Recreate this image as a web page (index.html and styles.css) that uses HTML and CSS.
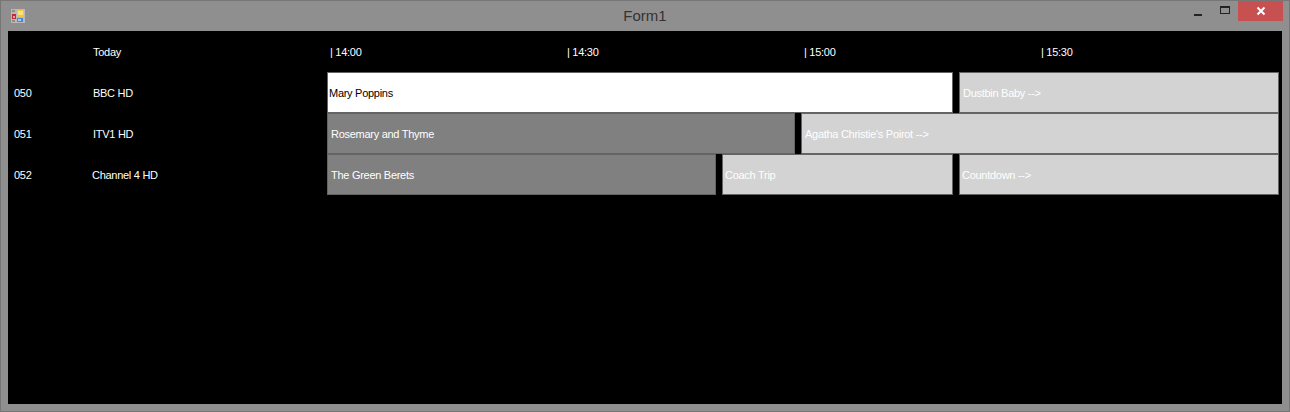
FILE: index.html
```html
<!DOCTYPE html>
<html>
   <head>
      <title>Form1</title>
      <link rel="stylesheet" href="styles.css">
   </head>
   <body>
      <div class="window">
         <div class="titlebar">
            <svg class="app-icon" width="14" height="14" viewBox="0 0 14 14">
               <rect x="0" y="0" width="14" height="14" fill="#b9b9b9"/>
               <rect x="1" y="1" width="3" height="2" fill="#8f8f8f"/>
               <rect x="1" y="5" width="4" height="5" fill="#c22c2c"/>
               <rect x="2" y="7" width="2" height="2" fill="#e8a0a0"/>
               <rect x="6" y="1" width="7" height="7" fill="#f3c53f"/>
               <rect x="7" y="2" width="5" height="4" fill="#fbe27e"/>
               <rect x="6" y="9" width="6" height="4" fill="#4c86d8"/>
               <rect x="7" y="10" width="3" height="2" fill="#a9c9f0"/>
               <rect x="1" y="11" width="3" height="2" fill="#8f8f8f"/>
            </svg>
            <span class="title">Form1</span>
            <div class="win-controls">
               <span class="win-btn"><span class="min-glyph"></span></span>
               <span class="win-btn"><span class="max-glyph"></span></span>
               <span class="win-btn close"><svg width="10" height="10" viewBox="0 0 10 10"><path d="M1.5 1.5 L8.5 8.5 M8.5 1.5 L1.5 8.5" stroke="#fff" stroke-width="2"/></svg></span>
            </div>
         </div>
         <div class="client">
            <div class="row header-row">
               <span class="channel-num"></span>
               <span class="channel-name">Today</span>
               <div class="times">
                  <span class="time">| 14:00</span>
                  <span class="time">| 14:30</span>
                  <span class="time">| 15:00</span>
                  <span class="time">| 15:30</span>
               </div>
            </div>
            <div class="row">
               <span class="channel-num">050</span>
               <span class="channel-name">BBC HD</span>
               <div class="programs">
                  <div class="prog now" style="width: 626px">Mary Poppins</div>
                  <div class="prog later" style="width: 320px">Dustbin Baby --&gt;</div>
               </div>
            </div>
            <div class="row">
               <span class="channel-num">051</span>
               <span class="channel-name">ITV1 HD</span>
               <div class="programs">
                  <div class="prog past" style="width: 468px">Rosemary and Thyme</div>
                  <div class="prog later" style="width: 478px">Agatha Christie's Poirot --&gt;</div>
               </div>
            </div>
            <div class="row">
               <span class="channel-num">052</span>
               <span class="channel-name wide">Channel 4 HD</span>
               <div class="programs">
                  <div class="prog past" style="width: 389px">The Green Berets</div>
                  <div class="prog later tight" style="width: 231px">Coach Trip</div>
                  <div class="prog later tight" style="width: 320px">Countdown --&gt;</div>
               </div>
            </div>
         </div>
      </div>
   </body>
</html>
```

FILE: styles.css
```css
* {
   margin: 0;
   padding: 0;
   box-sizing: border-box;
}
body {
   width: 1290px;
   height: 412px;
   overflow: hidden;
   font-family: 'Liberation Sans', Arial, sans-serif;
   font-size: 11px;
   letter-spacing: -0.28px;
   background: #8f8f8f;
}
.window {
   width: 1290px;
   height: 412px;
   display: flex;
   flex-direction: column;
   background: #8f8f8f;
   border: 1px solid #767676;
   padding: 0 7px 7px 7px;
}
.titlebar {
   height: 30px;
   display: flex;
   align-items: center;
   position: relative;
}
.app-icon {
   margin: 0 0 1px 3px;
}
.title {
   position: absolute;
   left: 0;
   right: 0;
   top: 6px;
   text-align: center;
   font-size: 15px;
   letter-spacing: 0;
   line-height: 18px;
   color: #333333;
}
.win-controls {
   position: absolute;
   top: 0;
   right: -1px;
   display: flex;
}
.win-btn {
   width: 26px;
   height: 20px;
   display: flex;
   align-items: center;
   justify-content: center;
}
.win-btn.close {
   width: 45px;
   background: #c75050;
}
.min-glyph {
   width: 8px;
   height: 2px;
   background: #222;
   margin: 7px 2px 0 0;
}
.max-glyph {
   width: 10px;
   height: 8px;
   border: 1px solid #222;
   border-top-width: 2px;
   margin-bottom: 2px;
}
.client {
   flex: 1;
   background: #000000;
   padding-top: 1px;
   color: #ffffff;
}
.row {
   display: flex;
   align-items: center;
   height: 41px;
}
.header-row {
   height: 40px;
}
.channel-num {
   width: 85px;
   padding-left: 6px;
}
.channel-name {
   width: 234px;
}
.channel-name.wide {
   margin-left: -1px;
   width: 235px;
}
.times {
   display: flex;
   padding-left: 3px;
}
.time {
   width: 237px;
}
.programs {
   display: flex;
   gap: 6px;
   height: 41px;
}
.prog {
   display: flex;
   align-items: center;
   padding: 1px 0 0 3px;
   border: 1px solid #646464;
}
.prog.now {
   background: #ffffff;
   color: #000000;
   padding-left: 1px;
}
.prog.past {
   background: #808080;
   color: #ffffff;
}
.prog.later {
   background: #d3d3d3;
   color: #ffffff;
}
.prog.tight {
   padding-left: 2px;
}
```
